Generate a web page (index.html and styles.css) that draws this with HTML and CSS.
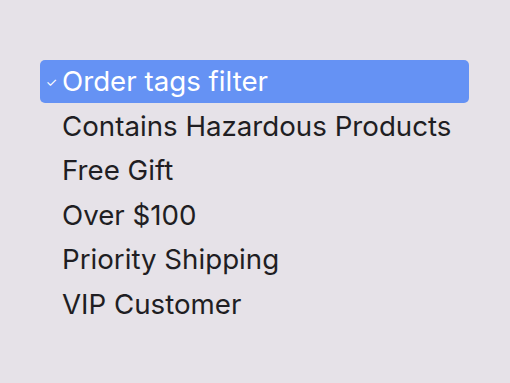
FILE: index.html
```html
<!DOCTYPE html>
<html>
<head>
<meta charset="utf-8">
<link rel="stylesheet" href="styles.css">
</head>
<body>
<ul class="menu">
  <li class="item selected"><span class="check">✓</span><span class="label">Order tags filter</span></li>
  <li class="item"><span class="check"></span><span class="label">Contains Hazardous Products</span></li>
  <li class="item"><span class="check"></span><span class="label">Free Gift</span></li>
  <li class="item"><span class="check"></span><span class="label">Over $100</span></li>
  <li class="item"><span class="check"></span><span class="label">Priority Shipping</span></li>
  <li class="item"><span class="check"></span><span class="label">VIP Customer</span></li>
</ul>
</body>
</html>
```
FILE: styles.css
```css
html, body {
  margin: 0;
  padding: 0;
  width: 510px;
  height: 383px;
  background: #e6e2e8;
  overflow: hidden;
}
.menu {
  list-style: none;
  margin: 0;
  padding: 60px 41px 0 40px;
  font-family: Inter, "Noto Sans", sans-serif;
  font-size: 27.7px;
  color: #1f1e23;
}
.item {
  display: flex;
  align-items: center;
  height: 44.5px;
  border-radius: 5px;
}
.selected {
  background: #6592f4;
  color: #ffffff;
  height: 43px;
  margin-bottom: 1.5px;
}
.check {
  width: 21px;
  font-size: 13px;
  text-align: center;
  padding-left: 1px;
}
.label {
  line-height: 1;
}
```
